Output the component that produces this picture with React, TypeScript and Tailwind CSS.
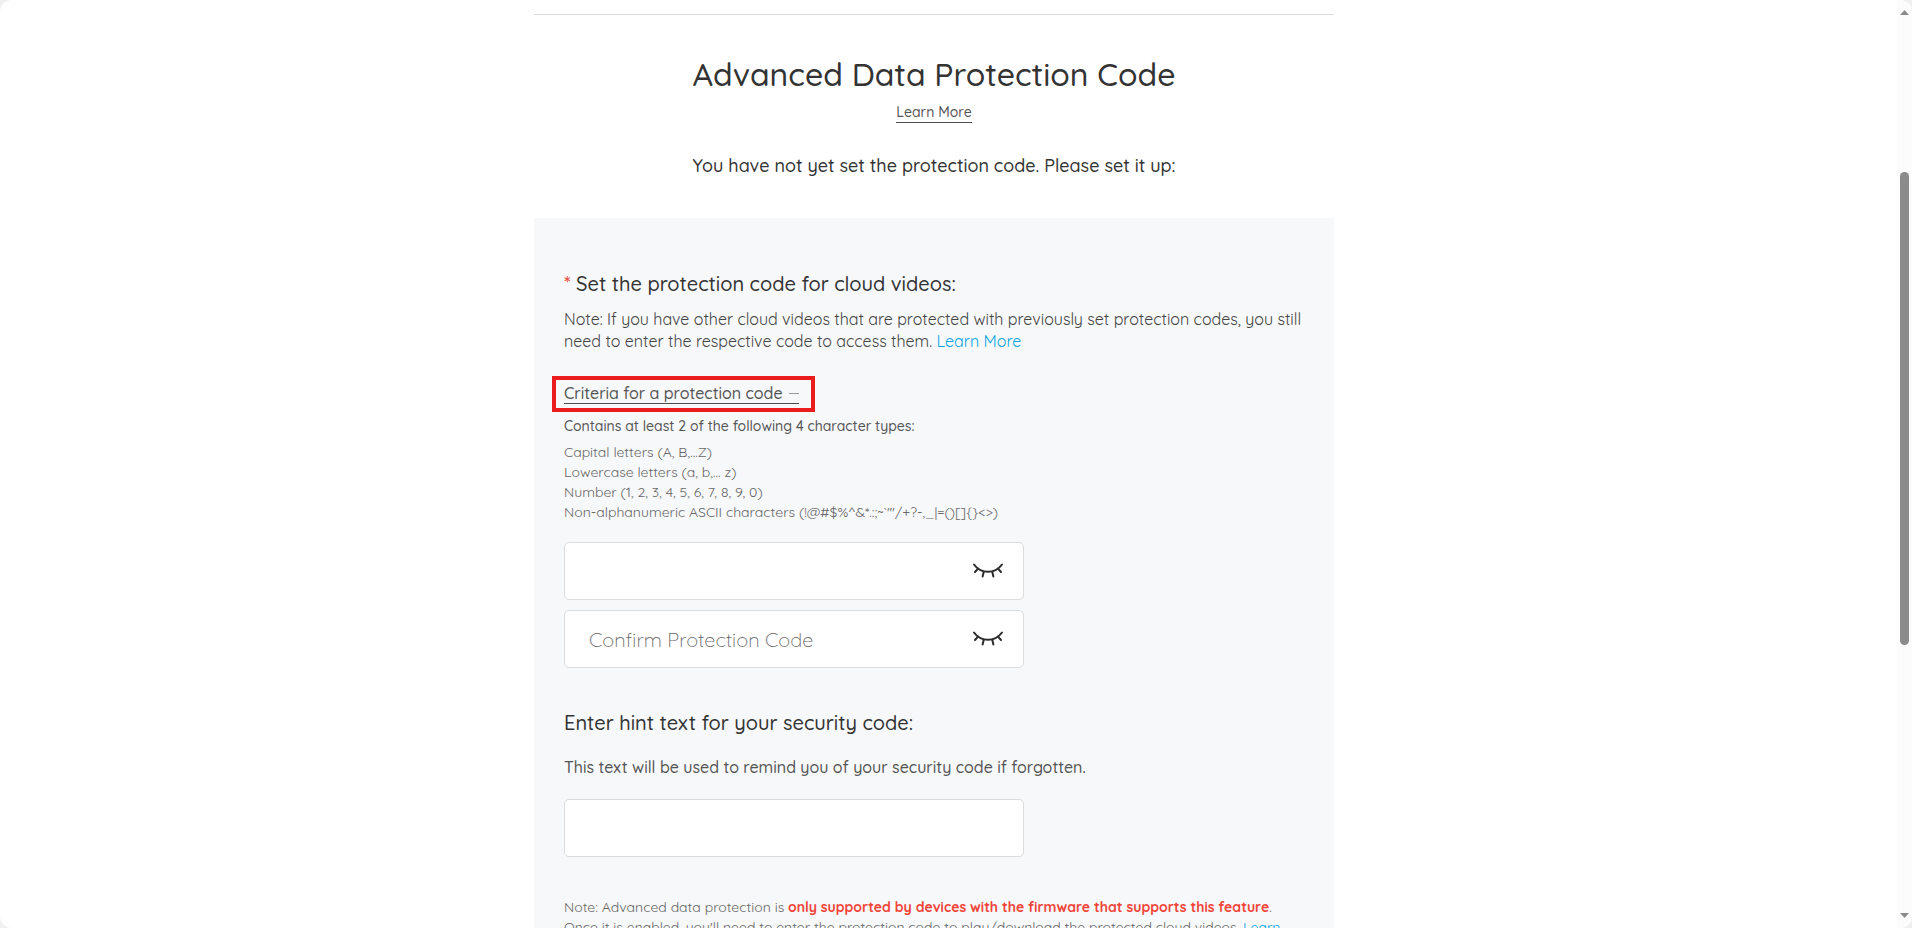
import { useState } from 'react';
import type { ReactNode } from 'react';

const CRITERIA = [
  'Capital letters (A, B,...Z)',
  'Lowercase letters (a, b,... z)',
  'Number (1, 2, 3, 4, 5, 6, 7, 8, 9, 0)',
  'Non-alphanumeric ASCII characters (!@#$%^&*.:;~`\'"/+?-,_|=()[]{}<>)',
];

const inputClass =
  'h-[58px] w-full rounded-[5px] border border-[#dadcde] bg-white pl-6 pr-16 text-xl font-light text-[#333] outline-none placeholder:text-[#666]';

function ClosedEye() {
  return (
    <svg width="32" height="16" viewBox="0 0 32 16" fill="none" stroke="#2b2b2b" strokeWidth="2" strokeLinecap="round" aria-hidden="true">
      <path d="M2 1.5C9 11.2 23 11.2 30 1.5" />
      <path d="M6 5.6L3 9M11.8 8.6L10.6 13.6M20.2 8.6L21.4 13.6M26 5.6L29 9" />
    </svg>
  );
}

function CodeInput({ label, placeholder }: { label: string; placeholder?: string }) {
  const [shown, setShown] = useState(false);

  return (
    <div className="relative max-w-[460px]">
      <input type={shown ? 'text' : 'password'} aria-label={label} placeholder={placeholder} className={inputClass} />
      <button
        type="button"
        aria-label="Toggle visibility"
        onClick={() => setShown(!shown)}
        className="absolute inset-y-0 right-5 flex items-center"
      >
        <ClosedEye />
      </button>
    </div>
  );
}

function BlueLink({ children }: { children: ReactNode }) {
  return <a href="#learn-more" className="text-[#0aa5e2]">{children}</a>;
}

function Scrollbar() {
  return (
    <div className="flex w-[15px] shrink-0 flex-col items-center bg-[#fcfcfc] py-[10px]" aria-hidden="true">
      <svg width="9" height="5" viewBox="0 0 9 5" fill="#8b8b8b"><path d="M4.5 0L9 5H0z" /></svg>
      <div className="flex w-full flex-1 flex-col items-center">
        <div className="grow-[157]" />
        <div className="w-[9px] grow-[473] rounded-full bg-[#8b8b8b]" />
        <div className="grow-[268]" />
      </div>
      <svg width="9" height="5" viewBox="0 0 9 5" fill="#8b8b8b"><path d="M0 0H9L4.5 5z" /></svg>
    </div>
  );
}

export default function App() {
  const [open, setOpen] = useState(true);

  return (
    <div className="h-screen bg-[#f0f0f0]">
      <div className="flex h-full overflow-hidden rounded-xl bg-white font-[Quicksand,'Open_Sans',sans-serif] text-[#333]">
        <main className="min-w-0 flex-1 overflow-hidden pr-[29px] pt-[14px]">
          <div className="mx-auto max-w-[800px]">
            <hr className="border-[#dadcde]" />

            <header className="flex flex-col items-center pt-[39px] text-center">
              <h1 className="text-[32px] font-medium leading-10">Advanced Data Protection Code</h1>
              <a href="#about" className="mt-[9px] border-b border-[#4d4d4d] text-sm font-medium leading-[19px] text-[#555]">Learn More</a>
              <p className="mt-[31px] text-lg font-medium leading-6">You have not yet set the protection code. Please set it up:</p>
            </header>

            <form className="mt-10 bg-[#f7f8fa] px-[30px] pb-16 pt-[50px]" onSubmit={(e) => e.preventDefault()}>
              <h2 className="text-xl font-medium leading-8"><span className="text-[#f04a32]">*</span> Set the protection code for cloud videos:</h2>
              <p className="mt-2 text-base leading-[22px] text-[#444]">
                Note: If you have other cloud videos that are protected with previously set protection codes, you still need to enter the respective code to access them. <BlueLink>Learn More</BlueLink>
              </p>

              <div className="-ml-3 mt-6 w-fit border-4 border-[#ea1c1e] py-1 pl-2 pr-3">
                <button
                  type="button"
                  aria-expanded={open}
                  onClick={() => setOpen(!open)}
                  className="flex items-center gap-[6px] border-b border-[#4d4d4d] text-base font-medium leading-[19px] text-[#555]"
                >
                  Criteria for a protection code
                  <span className="h-px w-[10px] bg-[#999]" />
                </button>
              </div>

              {open && (
                <div className="mt-0.5 text-sm leading-5 text-[#666]">
                  <p className="font-medium leading-6 text-[#555]">Contains at least 2 of the following 4 character types:</p>
                  <ul className="mt-1">
                    {CRITERIA.map((c) => <li key={c}>{c}</li>)}
                  </ul>
                </div>
              )}

              <div className="mt-5 flex flex-col gap-[10px]">
                <CodeInput label="Protection Code" />
                <CodeInput label="Confirm Protection Code" placeholder="Confirm Protection Code" />
              </div>

              <label htmlFor="hint" className="mt-[39px] block text-xl font-medium leading-8">Enter hint text for your security code:</label>
              <p className="mt-4 text-base font-medium leading-6 text-[#555]">This text will be used to remind you of your security code if forgotten.</p>
              <div className="mt-5 max-w-[460px]">
                <input id="hint" type="text" className={inputClass} />
              </div>

              <p className="mt-10 text-sm leading-5 text-[#666]">
                Note: Advanced data protection is <strong className="font-bold text-[#f04438]">only supported by devices with the firmware that supports this feature</strong>.<br />
                Once it is enabled, you'll need to enter the protection code to play/download the protected cloud videos. <BlueLink>Learn<br />More</BlueLink>
              </p>
            </form>
          </div>
        </main>
        <Scrollbar />
      </div>
    </div>
  );
}
